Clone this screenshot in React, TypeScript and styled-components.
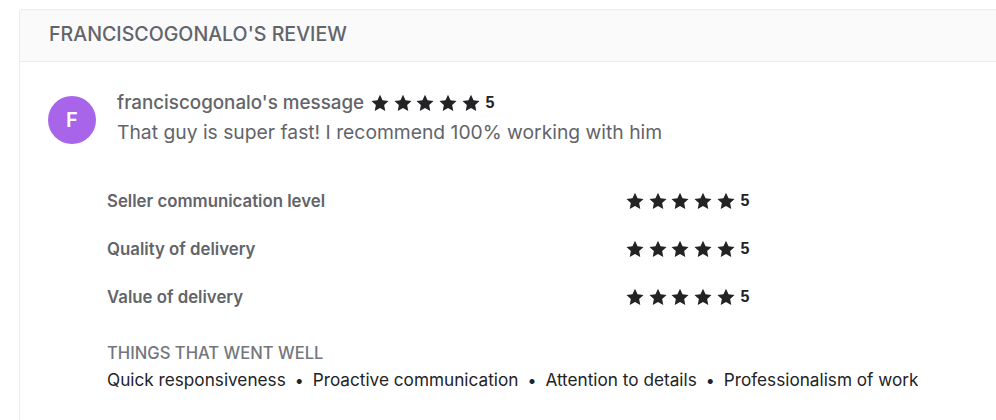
import styled, {createGlobalStyle} from "styled-components";

const GlobalStyle = createGlobalStyle`
    body {
        margin: 0;
        background: #ffffff;
        font-family: Inter, "Liberation Sans", sans-serif;
    }
`;

const Page = styled.div`
    padding: 9px 0 0 19px;
`;

const Card = styled.section`
    border: 1px solid #ececec;
    border-right: none;
    border-radius: 4px 0 0 4px;
    background: #fff;
    min-height: 420px;
`;

const CardHeader = styled.header`
    height: 52px;
    box-sizing: border-box;
    padding: 0 29px 4px;
    display: flex;
    align-items: center;
    background: #fafafa;
    border-bottom: 1px solid #ececec;
    border-radius: 4px 0 0 0;
`;

const HeaderTitle = styled.h2`
    margin: 0;
    font-size: 19.6px;
    line-height: 24px;
    font-weight: 500;
    color: #62646a;
`;

const Body = styled.div`
    padding: 29px 28px 0;
`;

const MessageRow = styled.div`
    display: flex;
    gap: 21px;
`;

const Avatar = styled.div`
    flex: 0 0 48px;
    height: 48px;
    margin-top: 5px;
    border-radius: 50%;
    background: #a865ea;
    color: #fff;
    display: flex;
    align-items: center;
    justify-content: center;
    font-size: 20px;
    font-weight: 600;
`;

const MessageText = styled.div`
    display: flex;
    flex-direction: column;
    gap: 5px;
`;

const MessageTitle = styled.div`
    display: flex;
    align-items: center;
    gap: 7px;
    font-size: 18.8px;
    line-height: 24px;
    font-weight: 500;
    color: #62646a;
`;

const MessageBody = styled.p`
    margin: 0;
    font-size: 19.3px;
    line-height: 24px;
    color: #62646a;
`;

const Ratings = styled.div`
    margin: 45px 0 0 59px;
    display: flex;
    flex-direction: column;
    gap: 24px;
`;

const RatingRow = styled.div`
    display: grid;
    grid-template-columns: 519px auto;
    align-items: center;
    height: 24px;
`;

const RatingLabel = styled.span`
    font-size: 16.8px;
    font-weight: 600;
    color: #62646a;
`;

const StarGroup = styled.span`
    display: inline-flex;
    align-items: center;
    gap: 4.7px;
`;

const Score = styled.span`
    margin-left: 1px;
    font-size: 16px;
    font-weight: 700;
    color: #222325;
    font-family: "Liberation Sans", Arial, sans-serif;
`;

const WentWell = styled.div`
    margin: 34px 0 0 59px;
`;

const WentWellTitle = styled.div`
    font-size: 16.6px;
    line-height: 20px;
    font-weight: 500;
    color: #74767e;
    text-transform: uppercase;
`;

const Tags = styled.div`
    margin-top: 5px;
    display: flex;
    align-items: center;
    font-size: 17.2px;
    line-height: 24px;
    color: #222325;
`;

const Dot = styled.span`
    margin: 0 9px;
    font-size: 16px;
`;

function Star() {
    return (
        <svg width="18" height="18" viewBox="0 0 24 24" fill="#222325">
            <path d="M12 0.9L15.41 8.2L23.41 9.2L17.52 14.7L19.05 22.6L12 18.7L4.95 22.6L6.48 14.7L0.59 9.2L8.59 8.2Z"/>
        </svg>
    );
}

function Stars({value}: { value: number }) {
    return (
        <StarGroup>
            {Array.from({length: 5}).map((_, i) => <Star key={i}/>)}
            <Score>{value}</Score>
        </StarGroup>
    );
}

const ratings = [
    {label: "Seller communication level", value: 5},
    {label: "Quality of delivery", value: 5},
    {label: "Value of delivery", value: 5},
];

const wentWell = [
    "Quick responsiveness",
    "Proactive communication",
    "Attention to details",
    "Professionalism of work",
];

export default function App() {
    return (
        <>
            <GlobalStyle/>
            <Page>
                <Card>
                    <CardHeader>
                        <HeaderTitle>FRANCISCOGONALO'S REVIEW</HeaderTitle>
                    </CardHeader>
                    <Body>
                        <MessageRow>
                            <Avatar>F</Avatar>
                            <MessageText>
                                <MessageTitle>
                                    franciscogonalo's message
                                    <Stars value={5}/>
                                </MessageTitle>
                                <MessageBody>That guy is super fast! I recommend 100% working with him</MessageBody>
                            </MessageText>
                        </MessageRow>
                        <Ratings>
                            {ratings.map((r) => (
                                <RatingRow key={r.label}>
                                    <RatingLabel>{r.label}</RatingLabel>
                                    <Stars value={r.value}/>
                                </RatingRow>
                            ))}
                        </Ratings>
                        <WentWell>
                            <WentWellTitle>Things that went well</WentWellTitle>
                            <Tags>
                                {wentWell.map((t, i) => (
                                    <span key={t}>
                                        {i > 0 && <Dot>•</Dot>}
                                        {t}
                                    </span>
                                ))}
                            </Tags>
                        </WentWell>
                    </Body>
                </Card>
            </Page>
        </>
    );
}
